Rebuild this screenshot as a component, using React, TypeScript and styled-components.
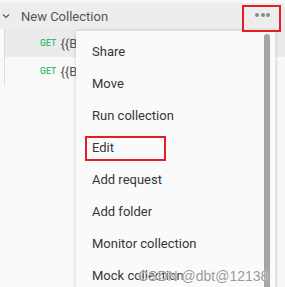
import React from 'react';
import styled, { createGlobalStyle } from 'styled-components';

const GlobalStyle = createGlobalStyle`
  html, body {
    margin: 0;
    padding: 0;
    background: #f9f9f9;
  }
  body {
    font-family: Roboto, "Liberation Sans", sans-serif;
  }
`;

const SidebarStyled = styled.div`
  position: relative;
  width: 285px;
  height: 287px;
  overflow: hidden;
  background: #f9f9f9;
  border-top: 3px solid #f6f6f6;
  box-sizing: border-box;
`;

const CollectionRow = styled.div`
  display: flex;
  align-items: center;
  height: 26px;
  background: #ededed;
  padding-left: 1px;
  gap: 10px;
  color: #555;
  font-size: 13px;
`;

const CollectionName = styled.span`
  flex: 1;
`;

const DotsButton = styled.div`
  display: flex;
  gap: 1.5px;
  padding: 0 15px 0 0;
  position: relative;
  top: -1px;
`;

const Dot = styled.span`
  width: 4px;
  height: 4px;
  border-radius: 50%;
  background: #8c8c8c;
`;

const RequestList = styled.div`
  margin-left: 4px;
  border-left: 1px solid #dcdcdc;
`;

const RequestRow = styled.div<{ $active?: boolean }>`
  display: flex;
  align-items: center;
  height: 28px;
  padding-left: 35px;
  gap: 4px;
  background: ${(p) => (p.$active ? '#ebebeb' : '#f9f9f9')};
  font-size: 13px;
  color: #555;
`;

const Method = styled.span`
  font-size: 8.5px;
  font-weight: 500;
  color: #2fbd6a;
  letter-spacing: 0.2px;
`;

const Menu = styled.div`
  position: absolute;
  left: 76px;
  top: 28px;
  width: 199px;
  height: 270px;
  background: #fafafa;
  box-shadow: 0 0 4px rgba(0, 0, 0, 0.18);
  padding-top: 4px;
  box-sizing: border-box;
`;

const MenuItem = styled.div`
  display: flex;
  align-items: center;
  height: 32px;
  padding-left: 16px;
  font-size: 13px;
  color: #363636;
`;

const Scrollbar = styled.div`
  position: absolute;
  right: 5px;
  top: 3px;
  bottom: 0;
  width: 6px;
  border-radius: 3px 3px 0 0;
  background: #a5a5a5;
`;

const Highlight = styled.div`
  position: absolute;
  border: 2px solid #e31e24;
  box-sizing: border-box;
`;

const RightEdge = styled.div`
  position: absolute;
  left: 276px;
  top: 57px;
  bottom: 0;
  width: 9px;
  border-left: 1px solid #e6e6e6;
  background: #f7f7f7;
`;

const Watermark = styled.div`
  position: absolute;
  left: 138px;
  top: 265px;
  white-space: nowrap;
  font-family: "Liberation Sans", sans-serif;
  font-size: 14px;
  color: rgba(125, 125, 125, 0.8);
  text-shadow: 0 0 1px #fff, 0 0 1px #fff;
`;

const Chevron = () => (
  <svg width="10" height="10" viewBox="0 0 10 10">
    <path d="M2 3.5 L5 6.5 L8 3.5" fill="none" stroke="#555" strokeWidth="1.1" />
  </svg>
);

const items = [
  'Share',
  'Move',
  'Run collection',
  'Edit',
  'Add request',
  'Add folder',
  'Monitor collection',
  'Mock collection',
];

export default function App() {
  return (
    <>
      <GlobalStyle />
      <SidebarStyled>
        <CollectionRow>
          <Chevron />
          <CollectionName>New Collection</CollectionName>
          <DotsButton>
            <Dot />
            <Dot />
            <Dot />
          </DotsButton>
        </CollectionRow>
        <RequestList>
          <RequestRow $active>
            <Method>GET</Method>
            <span>{'{{BASE_URL}}'}</span>
          </RequestRow>
          <RequestRow>
            <Method>GET</Method>
            <span>{'{{BASE_URL}}'}</span>
          </RequestRow>
        </RequestList>
        <RightEdge />
        <Menu>
          {items.map((item) => (
            <MenuItem key={item}>{item}</MenuItem>
          ))}
          <Scrollbar />
        </Menu>
        <Highlight style={{ left: 242, top: 2, width: 39, height: 27 }} />
        <Highlight style={{ left: 85, top: 133, width: 81, height: 25 }} />
        <Watermark>CSDN @dbt@12138</Watermark>
      </SidebarStyled>
    </>
  );
}
